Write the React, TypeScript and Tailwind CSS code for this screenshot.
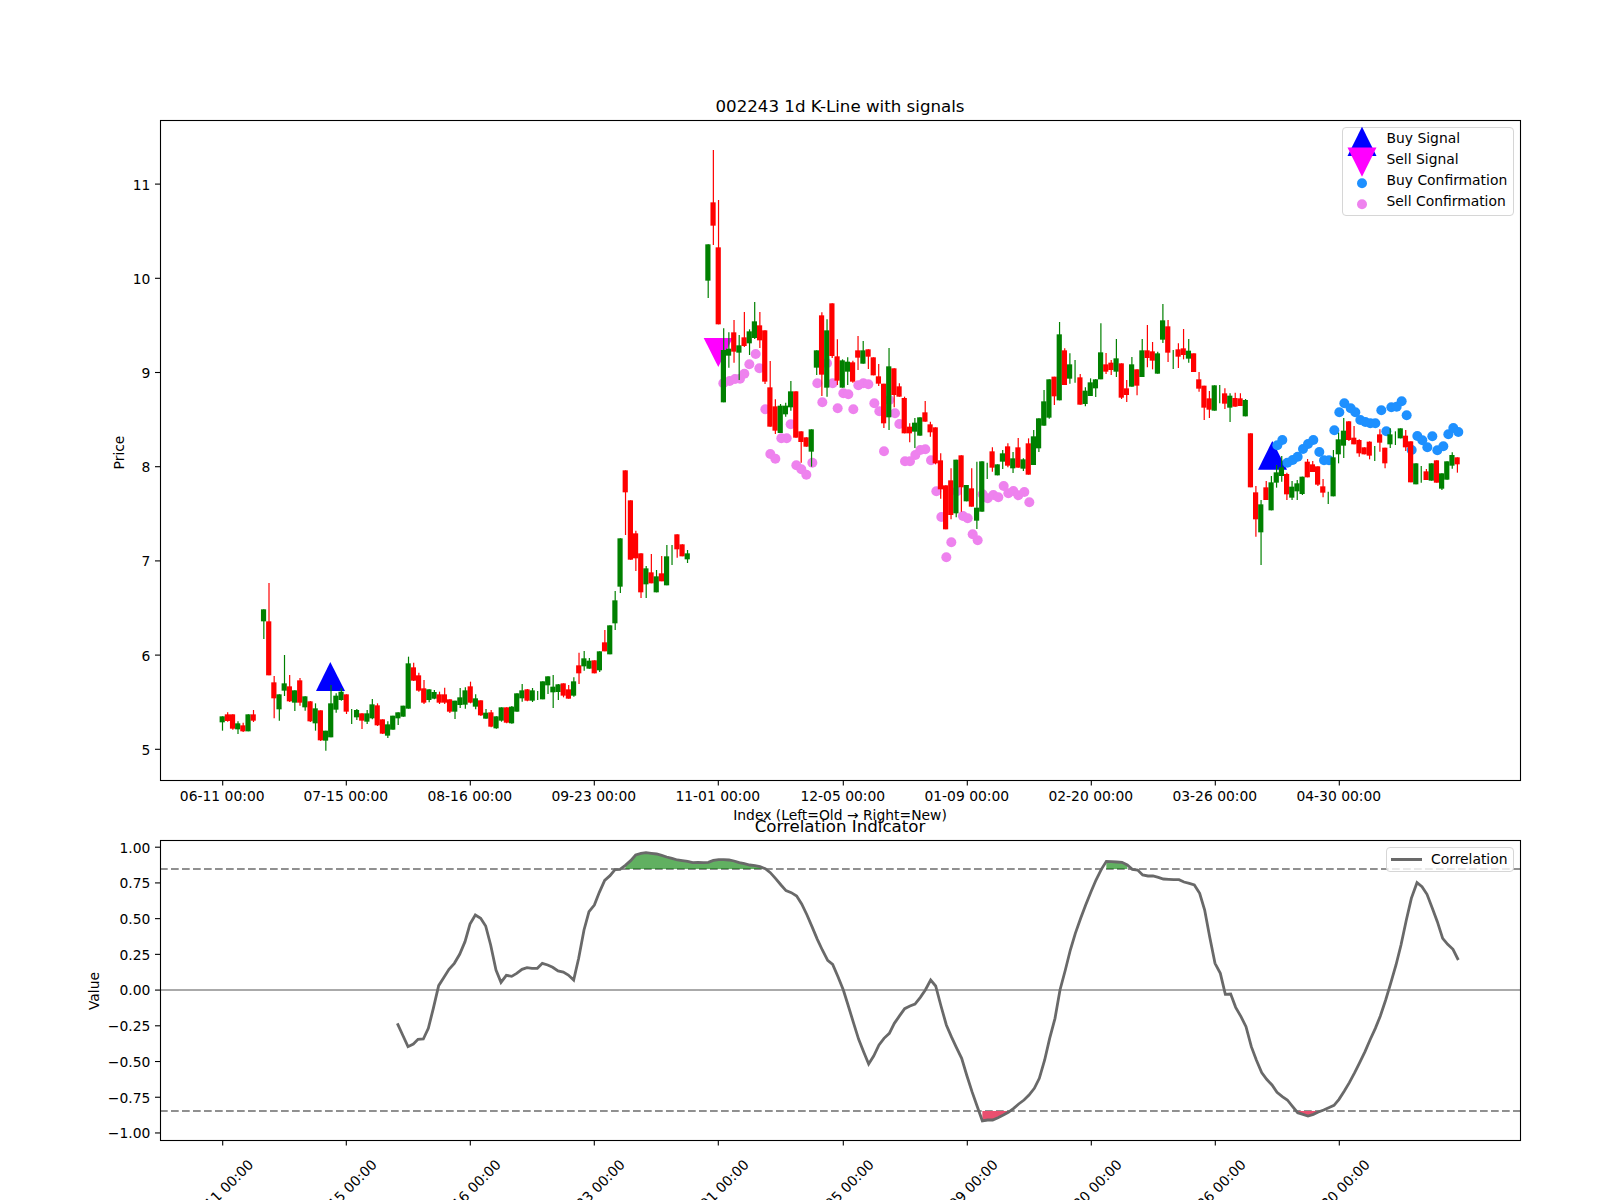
const GREEN = "#008000"
const RED = "#ff0000"

type Row = [string, number, number, number, number] | null

const xOf = (i: number) => 222.2 + 5.167 * i

// candles read per crop: colour, wick top, body top, body bottom, wick bottom
const seg1: Row[] = [
  ["g",709,709,727,752],["r",697,703,723,725],["r",703,703,746,749],["g",724,730,748,762],["r",728,736,754,756],
  ["g",703,703,754,754],["r",690,703,722,726],null,["g",388,388,424,477],["r",309,424,586,586],
  ["r",588,607,655,715],["g",643,643,688,722],["g",525,610,632,648],["r",585,619,664,666],["g",631,631,668,693],
  ["r",594,601,668,677],["g",649,649,682,692],["r",663,664,724,726],["g",670,685,730,752],["r",691,691,781,783],
  ["g",752,752,782,812],["g",615,670,772,772],["g",640,647,689,698],["g",625,635,660,662],["r",643,643,695,702],
  ["g",687,700,700,732],["g",687,690,712,720],["r",700,700,722,747],["g",690,700,725,732],["g",657,673,715,718],
  ["r",670,676,736,738],["r",718,718,761,762],["g",724,733,767,774],["g",707,707,749,749],["g",697,697,715,735],
  ["g",677,677,710,710],["g",530,550,686,686],["r",548,562,602,603],["r",578,586,632,635],["r",600,625,668,672],
  ["g",628,628,660,667],["g",630,636,656,658],["r",635,643,668,672],["r",623,643,668,672],["r",658,658,695,699],
  ["g",662,662,695,717],["g",624,652,675,684],["g",622,631,674,686],["r",605,619,668,670],["g",643,655,680,688],
  ["r",661,661,706,708],["g",687,698,716,716],["r",690,697,740,742],["g",709,709,745,746],["g",682,682,722,725],
  ["r",682,682,728,730],["g",678,680,730,731],["g",640,640,695,695],["g",612,631,655,665],["r",627,628,662,664],
  ["g",624,631,662,666],["g",633,646,646,660],
]
const seg2: Row[] = [
  ["g",664,664,718,718],["g",649,649,676,702],["g",645,680,697,744],["g",672,673,696,720],["r",670,670,707,712],
  ["r",675,688,716,716],["g",652,664,707,710],["r",578,616,640,672],["g",573,595,619,632],["g",594,602,626,626],
  ["r",601,601,640,640],["g",574,574,631,636],["r",510,547,574,574],["g",496,496,583,583],["g",393,421,490,510],
  ["g",235,235,380,399],["r",31,31,97,225],["r",121,121,299,299],["r",212,220,295,333],["r",280,280,397,414],
  ["g",318,325,373,414],["r",282,337,370,370],["g",330,349,397,397],["r",288,340,364,364],["g",255,289,376,376],
  ["g",255,285,285,315],["r",223,223,268,293],["r",253,253,289,289],["g",270,280,298,309],null,null,null,
]
const seg3: Row[] = [
  ["g",373,373,482,534],["r",90,247,317,375],["r",240,382,613,613],["g",625,690,847,847],["g",637,686,707,743],
  ["r",600,637,695,728],["g",645,676,698,780],["r",576,652,678,681],["g",628,634,670,705],["g",546,604,654,657],
  ["r",576,616,661,684],
]
const seg4: Row[] = [
  ["r",151,151,305,312],["r",243,322,440,440],["r",358,379,452,462],["g",372,377,459,459],["g",368,377,403,410],
  ["g",303,334,382,392],["r",334,334,473,473],["r",454,454,486,548],["r",472,472,500,500],["g",448,448,515,560],
  ["g",211,211,263,285],["r",97,106,284,348],["g",118,151,323,350],["r",70,70,228,234],["r",178,229,302,315],
  ["g",238,241,323,323],["g",232,245,275,315],["r",242,247,305,308],["r",168,211,233,270],["g",183,211,251,251],
  ["r",208,208,230,267],["r",232,232,286,286],["r",252,289,311,318],["r",311,311,430,444],["g",204,259,412,450],
  ["r",265,265,345,382],["r",310,319,350,350],["r",350,354,460,460],["r",430,440,460,487],["g",414,428,455,504],
  ["g",412,412,467,467],["r",363,397,425,425],["r",425,433,457,470],["r",442,442,550,553],["r",520,541,628,656],
  ["r",616,616,748,748],["r",565,601,705,718],["g",539,539,700,712],["r",526,526,622,695],["g",615,615,664,664],
  ["r",565,625,680,680],
]
const seg5: Row[] = [
  ["g",545,683,722,747],["g",544,544,695,695],["g",548,572,572,597],["r",502,514,563,575],["g",553,553,586,586],
  ["g",510,520,545,567],["r",490,499,557,562],["g",516,535,565,579],["r",474,502,563,563],["g",535,538,566,573],
  ["r",475,490,584,584],["g",450,469,555,555],["g",415,415,505,516],["g",330,364,437,437],["g",298,298,413,416],
  ["r",290,290,349,375],["g",126,163,361,361],["r",205,211,315,315],["g",220,253,296,311],["g",240,274,274,308],
  ["r",282,292,374,374],["g",322,332,372,379],["g",295,307,348,348],["g",297,298,325,351],["g",130,217,298,298],
  ["r",219,253,275,282],["r",240,248,270,285],["g",177,235,275,291],["r",250,250,353,357],["r",300,325,345,366],
  ["g",231,253,320,320],["r",268,268,317,346],["g",177,211,291,291],["r",135,211,234,262],["r",186,214,242,268],
  ["g",215,220,281,281],["g",72,121,179,189],["r",120,139,218,246],["g",210,238,238,267],["r",190,208,230,264],
  ["r",147,205,225,238],["g",177,212,236,248],["r",220,220,276,276],["r",276,298,326,335],["r",317,317,383,420],
  ["r",333,355,389,414],["g",316,316,392,392],["g",315,342,342,370],["r",325,340,371,387],["g",340,347,383,426],
  ["r",338,354,380,380],
]
const seg6: Row[] = [
  ["r",70,85,108,108],["g",87,90,139,139],["r",190,190,352,352],["r",348,367,448,500],["g",390,403,487,585],
  ["r",333,352,390,390],["g",318,337,421,421],["g",285,307,338,353],["g",258,292,318,335],["r",308,312,373,390],
  ["g",333,350,383,390],["g",330,340,364,390],["g",320,320,372,375],["r",267,275,322,322],["r",273,283,306,306],
  ["r",289,289,344,348],["r",327,349,368,382],["g",365,383,383,402],["g",240,262,379,379],["g",188,208,253,280],
  ["g",144,182,227,264],["r",153,154,210,213],["r",168,203,223,223],["r",208,210,250,260],["r",232,232,253,253],
  ["r",214,215,257,268],["g",228,250,250,273],["r",178,193,218,245],["r",233,233,280,295],["g",175,193,223,234],
  ["g",184,204,204,225],["g",175,175,205,205],["r",180,197,232,243],["r",214,214,337,337],["g",280,280,343,343],
  ["g",288,313,313,338],["r",297,304,330,330],["g",280,280,332,332],["r",271,271,338,338],["g",310,310,356,360],
  ["g",274,274,329,329],["g",247,255,287,296],["r",262,262,283,308],
]

const toPx = (rows: Row[], y0: number) =>
  rows.map((r) => (r ? ([r[0], ...r.slice(1).map((v) => y0 + (v as number) / 3)] as Row) : null))

const candles: Row[] = [
  ...toPx(seg1, 480),
  ...toPx(seg2, 460),
  ...toPx(seg3, 120),
  ...toPx(seg4, 280),
  ...toPx(seg5, 280),
  ...toPx(seg6, 370),
]

const pinkA = [[130,310],[149,303],[165,297],[180,296],[193,281],[208,253],[227,222],[238,265],[256,388],[332,433],[304,475],[320,475],[271,522],[286,536],[349,556],[364,568],[379,584],[397,548],[412,310],[427,367],[441,250],[458,310],[473,385],[490,340],[505,343],[520,388],[535,316],[550,310],[565,313],[583,370],[598,394],[612,514],[628,360],[645,400],[658,432]]
const pinkB = [[15,544],[30,544],[46,525],[61,510],[76,508],[93,541],[109,634],[124,711],[139,832],[154,787],[171,634],[189,708],[203,715],[218,763],[233,781],[248,643],[263,655],[280,645],[295,652],[311,618],[325,640],[340,633],[355,646],[373,636],[388,667]]
const blue = [[172,226],[187,210],[202,278],[218,270],[233,260],[249,237],[264,222],[280,210],[298,246],[312,271],[327,271],[343,181],[358,127],[373,100],[392,115],[406,127],[421,150],[436,156],[451,160],[466,160],[484,121],[499,184],[514,112],[530,110],[545,94],[560,136],[575,240],[592,198],[607,211],[622,232],[637,199],[652,241],[670,229],[685,193],[700,174],[715,186]]

const corrA = [[952,760],[968,795],[984,830],[1000,822],[1014,808],[1030,807],[1045,775],[1060,715],[1076,647],[1092,622],[1107,598],[1123,580],[1139,553],[1155,515],[1170,462],[1186,435],[1202,445],[1217,468],[1232,525],[1248,600],[1263,637],[1279,616],[1295,619],[1310,610],[1326,598],[1341,593],[1356,595],[1372,595],[1387,580],[1403,585],[1418,592],[1434,603],[1450,606],[1465,615]]
const corrB = [[41,630],[56,565],[72,480],[87,425],[103,405],[118,367],[134,331],[150,317],[165,299],[180,298],[196,286],[212,272],[227,255],[243,250],[258,248],[274,250],[290,252],[305,256],[320,261],[336,265],[352,270],[367,272],[383,274],[398,278],[414,277],[430,278],[445,277],[460,271],[476,269],[491,269],[507,270],[522,273],[538,278],[553,281],[569,285],[585,287],[600,290],[616,296],[631,308],[647,326],[663,345],[678,362],[694,368],[710,378],[725,402],[741,435],[756,470],[772,508],[787,540],[803,571],[818,583],[834,620],[850,660],[865,708],[881,760],[896,808],[912,848],[926,882],[941,858],[957,825],[972,805],[988,790],[1003,760],[1019,737],[1034,716],[1050,708],[1065,702],[1081,682],[1096,660],[1112,630],[1127,648],[1143,708],[1159,765],[1174,800],[1189,832],[1205,865],[1220,915],[1236,965],[1252,1010],[1267,1053],[1283,1050],[1298,1050],[1314,1043],[1330,1035],[1345,1027],[1361,1015],[1376,1002],[1392,990],[1407,975],[1423,955],[1438,925],[1454,870],[1469,805],[1485,745]]
const corrC = [[60,660],[76,600],[91,540],[106,490],[122,445],[137,405],[153,365],[168,330],[184,298],[199,274],[215,275],[230,276],[246,277],[262,285],[277,298],[293,300],[308,315],[324,318],[339,318],[355,322],[370,327],[386,328],[401,329],[417,329],[432,336],[448,340],[463,345],[479,370],[494,420],[509,500],[525,580],[541,610],[556,673],[572,672],[587,712],[603,740],[618,770],[634,830],[649,870],[665,908],[680,928],[696,945],[711,967],[727,980],[742,990],[758,1010],[773,1028],[789,1033],[804,1038],[820,1033],[835,1026],[851,1020],[866,1013],[882,1006],[897,988],[913,963],[928,938],[944,908],[959,878],[975,845],[990,810],[1006,775],[1021,738],[1037,690],[1052,640],[1068,585],[1083,525],[1099,450],[1114,385],[1131,338],[1146,350],[1161,373],[1177,415],[1192,455],[1208,505],[1223,523],[1239,538],[1255,570]]

const corr = [
  ...corrA.map(([x, y]) => [80 + x / 3, 770 + y / 3]),
  ...corrB.map(([x, y]) => [560 + x / 3, 770 + y / 3]),
  ...corrC.map(([x, y]) => [1040 + x / 3, 770 + y / 3]),
]

const UPPER = 869
const LOWER = 1111

// runs of the line past a threshold, closed back onto the threshold
function fillRuns(past: (y: number) => boolean, base: number) {
  const out: string[] = []
  let run: number[][] = []
  for (const p of [...corr, [0, 990]]) {
    if (past(p[1])) {
      run.push(p)
    } else {
      if (run.length > 1) {
        const first = run[0][0]
        const last = run[run.length - 1][0]
        out.push(`${first},${base} ${run.map((q) => q.join(",")).join(" ")} ${last},${base}`)
      }
      run = []
    }
  }
  return out
}

const xLabels = ["06-11 00:00", "07-15 00:00", "08-16 00:00", "09-23 00:00", "11-01 00:00", "12-05 00:00", "01-09 00:00", "02-20 00:00", "03-26 00:00", "04-30 00:00"]
const xTicks = [222.7, 346.3, 470.3, 594.3, 718.3, 843.3, 967.3, 1091.3, 1215.3, 1339.3]
const priceTicks = [5, 6, 7, 8, 9, 10, 11]
const corrTicks = ["1.00", "0.75", "0.50", "0.25", "0.00", "−0.25", "−0.50", "−0.75", "−1.00"]

function PriceChart() {
  return (
    <svg viewBox="0 119 1600 687" className="block w-[1600px] h-[687px] text-[13.89px]">
      <polygon points="316,691 330.3,662 345,691" fill="#0000ff" />
      <polygon points="1258,469.7 1272.3,441 1287,469.7" fill="#0000ff" />
      <polygon points="703.7,338 732.7,338 718.3,367" fill="#ff00ff" />
      {pinkA.map(([x, y], i) => (
        <circle key={i} cx={680 + x / 3} cy={280 + y / 3} r={5} fill="#ee82ee" />
      ))}
      {pinkB.map(([x, y], i) => (
        <circle key={i} cx={900 + x / 3} cy={280 + y / 3} r={5} fill="#ee82ee" />
      ))}
      {blue.map(([x, y], i) => (
        <circle key={i} cx={1220 + x / 3} cy={370 + y / 3} r={5} fill="#1e90ff" />
      ))}
      {candles.map((c, i) => {
        if (!c) return null
        const color = c[0] === "g" ? GREEN : RED
        const x = xOf(i)
        return (
          <g key={i}>
            <line x1={x + 0.3} x2={x + 0.3} y1={c[1]} y2={c[4]} stroke={color} strokeWidth={1.2} />
            {c[3] > c[2] && <rect x={x - 2.6} y={c[2]} width={5.2} height={c[3] - c[2]} fill={color} />}
          </g>
        )
      })}
      <rect x={160.5} y={120.5} width={1360} height={660} fill="none" stroke="#000" strokeWidth={1.1} />
      {priceTicks.map((v) => {
        const y = 749.3 - (v - 5) * 94.2
        return (
          <g key={v}>
            <line x1={155} x2={160} y1={y} y2={y} stroke="#000" strokeWidth={1.1} />
            <text x={150.3} y={y + 5.5} textAnchor="end">{v}</text>
          </g>
        )
      })}
      {xTicks.map((x, i) => (
        <g key={x}>
          <line x1={x} x2={x} y1={781} y2={785.5} stroke="#000" strokeWidth={1.1} />
          <text x={x - 0.5} y={801} textAnchor="middle">{xLabels[i]}</text>
        </g>
      ))}
      <text x={124} y={452.5} textAnchor="middle" transform="rotate(-90 124 452.5)">Price</text>
    </svg>
  )
}

function CorrChart() {
  const line = corr.map((p) => p.join(",")).join(" ")
  return (
    <svg viewBox="0 839 1600 361" className="block w-[1600px] h-[361px] text-[13.89px]">
      <line x1={160} x2={1520} y1={869} y2={869} stroke="#909090" strokeWidth={2} strokeDasharray="7.7 3.3" />
      <line x1={160} x2={1520} y1={1111} y2={1111} stroke="#909090" strokeWidth={2} strokeDasharray="7.7 3.3" />
      <line x1={160} x2={1520} y1={990} y2={990} stroke="#aaaaaa" strokeWidth={1.8} />
      {fillRuns((y) => y < UPPER, UPPER).map((pts) => (
        <polygon key={pts} points={pts} fill="#008000" fillOpacity={0.62} />
      ))}
      {fillRuns((y) => y > LOWER, LOWER).map((pts) => (
        <polygon key={pts} points={pts} fill="#e9506f" />
      ))}
      <polyline points={line} fill="none" stroke="#696969" strokeWidth={2.8} />
      <rect x={160.5} y={840.5} width={1360} height={300} fill="none" stroke="#000" strokeWidth={1.1} />
      {corrTicks.map((label, i) => {
        const y = 847.2 + i * 35.72
        return (
          <g key={label}>
            <line x1={155} x2={160} y1={y} y2={y} stroke="#000" strokeWidth={1.1} />
            <text x={150.3} y={y + 5.4} textAnchor="end">{label}</text>
          </g>
        )
      })}
      {xTicks.map((x, i) => (
        <g key={x}>
          <line x1={x} x2={x} y1={1141} y2={1145.5} stroke="#000" strokeWidth={1.1} />
          <text x={x - 2} y={1197} textAnchor="middle" transform={`rotate(-45 ${x - 2} 1192)`}>{xLabels[i]}</text>
        </g>
      ))}
      <text x={99} y={991} textAnchor="middle" transform="rotate(-90 99 991)">Value</text>
    </svg>
  )
}

function SignalLegend() {
  const rows = [
    { label: "Buy Signal", mark: <polygon points="19,-0.8 4.5,28.5 33.5,28.5" fill="#0000ff" /> },
    { label: "Sell Signal", mark: <polygon points="4.5,-1.1 33.5,-1.1 19,28.2" fill="#ff00ff" /> },
    { label: "Buy Confirmation", mark: <circle cx={19} cy={13.8} r={5} fill="#1e90ff" /> },
    { label: "Sell Confirmation", mark: <circle cx={19} cy={13.8} r={5} fill="#ee82ee" /> },
  ]
  return (
    <div className="absolute left-[1342px] top-[8px] w-[172px] h-[89px] rounded-[4px] border border-[#d6d6d6] bg-white/80">
      {rows.map((r) => (
        <div key={r.label} className="flex items-center h-[21px] -translate-y-[0.5px]">
          <svg className="w-[39px] h-[21px] overflow-visible shrink-0">{r.mark}</svg>
          <span className="ml-[4.5px] text-[13.89px] leading-[21px] whitespace-nowrap">{r.label}</span>
        </div>
      ))}
    </div>
  )
}

function CorrLegend() {
  return (
    <div className="absolute left-[1386px] top-[8px] w-[128px] h-[25px] flex items-center rounded-[4px] border border-[#d6d6d6] bg-white/80">
      <span className="ml-[4px] w-[31px] h-[3px] bg-[#696969]" />
      <span className="ml-[9px] text-[13.89px] leading-[21px]">Correlation</span>
    </div>
  )
}

export default function App() {
  return (
    <div className="w-[1600px] h-[1200px] overflow-hidden bg-white text-black font-['DejaVu_Sans',sans-serif]">
      <h2 className="w-[1680px] pt-[97px] h-[119px] text-center text-[16.67px] leading-[20px] font-normal">
        002243 1d K-Line with signals
      </h2>
      <div className="relative">
        <PriceChart />
        <SignalLegend />
      </div>
      <p className="w-[1680px] pt-[1px] h-[16px] text-center text-[13.89px] leading-[16px]">Index (Left=Old → Right=New)</p>
      <h2 className="w-[1680px] -mt-[4px] h-[21px] text-center text-[16.67px] leading-[18px] font-normal">
        Correlation Indicator
      </h2>
      <div className="relative">
        <CorrChart />
        <CorrLegend />
      </div>
    </div>
  )
}
